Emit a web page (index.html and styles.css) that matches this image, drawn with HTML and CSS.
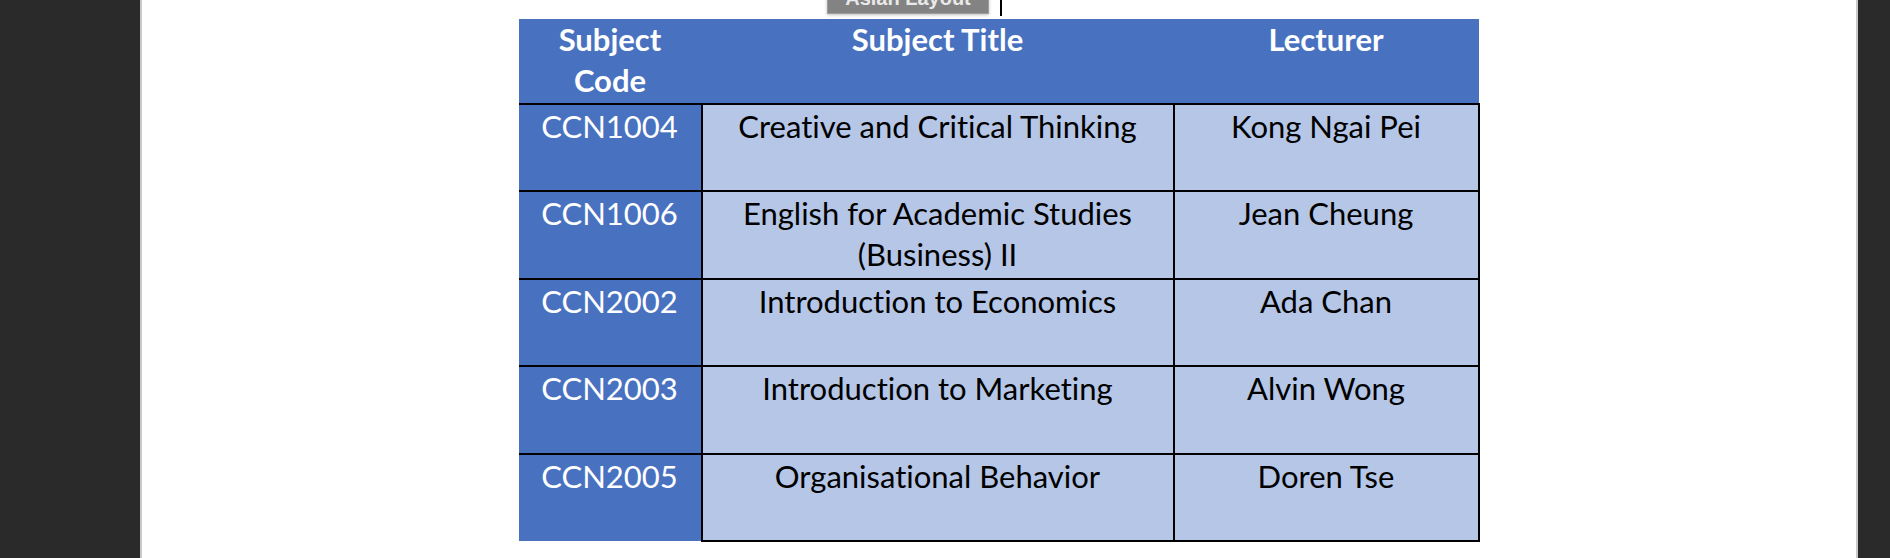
FILE: index.html
```html
<!DOCTYPE html>
<html lang="en">
<head>
    <meta charset="UTF-8">
    <meta name="viewport" content="width=device-width, initial-scale=1.0">
    <title>Subjects</title>
    <link rel="stylesheet" href="styles.css">
</head>
<body>
    <div class="viewer">
        <div class="page">
            <div class="tip">Asian Layout</div>
            <span class="caret"></span>

            <table class="subjects">
                <colgroup>
                    <col class="col-code">
                    <col class="col-title">
                    <col class="col-lecturer">
                </colgroup>
                <thead>
                    <tr>
                        <th>Subject<br>Code</th>
                        <th>Subject Title</th>
                        <th>Lecturer</th>
                    </tr>
                </thead>
                <tbody>
                    <tr>
                        <td class="code">CCN1004</td>
                        <td>Creative and Critical Thinking</td>
                        <td>Kong Ngai Pei</td>
                    </tr>
                    <tr>
                        <td class="code">CCN1006</td>
                        <td>English for Academic Studies<br>(Business) II</td>
                        <td>Jean Cheung</td>
                    </tr>
                    <tr>
                        <td class="code">CCN2002</td>
                        <td>Introduction to Economics</td>
                        <td>Ada Chan</td>
                    </tr>
                    <tr>
                        <td class="code">CCN2003</td>
                        <td>Introduction to Marketing</td>
                        <td>Alvin Wong</td>
                    </tr>
                    <tr>
                        <td class="code">CCN2005</td>
                        <td>Organisational Behavior</td>
                        <td>Doren Tse</td>
                    </tr>
                </tbody>
            </table>
        </div>
    </div>
</body>
</html>
```

FILE: styles.css
```css
body {
    margin: 0;
    background: #2a2a2a;
    font-family: Lato, "Open Sans", sans-serif;
    font-variant-ligatures: none;
}
.viewer {
    height: 558px;
    overflow: hidden;
    padding-left: 140px;
}
.page {
    position: relative;
    box-sizing: border-box;
    width: 1718px;
    height: 558px;
    padding-top: 19px;
    background: #fff;
    border-left: 2px solid #c9c9c9;
    border-right: 2px solid #c9c9c9;
}
.tip {
    position: absolute;
    left: 685px;
    top: -22px;
    width: 162px;
    height: 36px;
    box-sizing: border-box;
    padding-top: 7px;
    background: #838383;
    border: 1px solid #9d9d9d;
    box-shadow: 0 1px 3px rgba(0, 0, 0, 0.25);
    color: #e9e9e9;
    font-family: "Liberation Sans", Arial, sans-serif;
    font-size: 20px;
    font-weight: bold;
    text-align: center;
    line-height: 24px;
}
.caret {
    position: absolute;
    left: 858px;
    top: 0;
    width: 2px;
    height: 16px;
    background: #000;
}
.subjects {
    margin: 0 auto;
    width: 960px;
    table-layout: fixed;
    border-collapse: collapse;
    font-size: 31px;
    line-height: 41px;
    text-align: center;
}
.col-code {
    width: 183px;
}
.col-title {
    width: 472px;
}
.col-lecturer {
    width: 305px;
}
th, td {
    vertical-align: top;
    padding: 1px 4px 0;
}
thead tr {
    height: 85px;
}
th {
    background: #4872c0;
    color: #fff;
    font-weight: 700;
    border: none;
    padding-top: 0;
}
tbody tr {
    height: 87.4px;
}
td {
    background: #b5c6e6;
    color: #000;
    border: 2px solid #000;
}
td.code {
    background: #4872c0;
    color: #fff;
    border-left: none;
    border-bottom: none;
}
```
